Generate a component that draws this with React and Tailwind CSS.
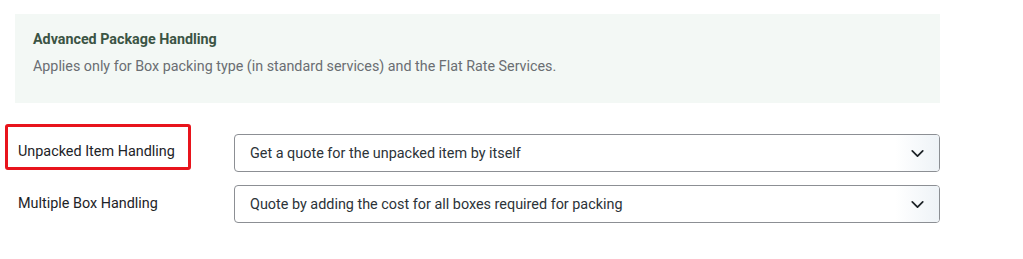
import { ChevronDown } from "lucide-react";

function SelectBox({ text }) {
    return (
        <div className="flex h-[38px] w-[706px] items-stretch justify-between overflow-hidden rounded-[4px] border border-[#8c8f94] bg-white">
            <span className="self-center pl-[15px] pt-[1px] text-[14.4px] text-[#2c3338]">{text}</span>
            <div className="flex w-[44px] items-center justify-center bg-gradient-to-r from-white to-[#eef3f7]">
                <ChevronDown className="h-[21px] w-[21px] text-[#1d2327]" strokeWidth={2} />
            </div>
        </div>
    );
}

export default function App() {
    return (
        <div className="h-[259px] w-[1023px] bg-white font-['Roboto',sans-serif]">
            <div className="pl-[15px] pt-[14px]">
                <div className="h-[89px] w-[925px] bg-[#f3f8f5] px-[18px] pt-[16px]">
                    <div className="text-[14.3px] font-bold leading-[18px] text-[#3b5444]">Advanced Package Handling</div>
                    <div className="mt-[9px] text-[14.3px] leading-[18px] text-[#6a6e72]">
                        Applies only for Box packing type (in standard services) and the Flat Rate Services.
                    </div>
                </div>
            </div>
            <div className="mt-[31px] flex flex-col gap-[13px]">
                <div className="flex items-start">
                    <div className="relative w-[234px] pl-[18px] pt-[5px]">
                        <span className="text-[14.4px] leading-[18px] text-[#1d2327]">Unpacked Item Handling</span>
                        <div className="absolute left-[5px] top-[-10px] h-[46px] w-[186px] rounded-[3px] border-[3px] border-[#e8141c]" />
                    </div>
                    <SelectBox text="Get a quote for the unpacked item by itself" />
                </div>
                <div className="flex items-start">
                    <div className="w-[234px] pl-[18px] pt-[6px]">
                        <span className="text-[14.4px] leading-[18px] text-[#1d2327]">Multiple Box Handling</span>
                    </div>
                    <SelectBox text="Quote by adding the cost for all boxes required for packing" />
                </div>
            </div>
        </div>
    );
}
